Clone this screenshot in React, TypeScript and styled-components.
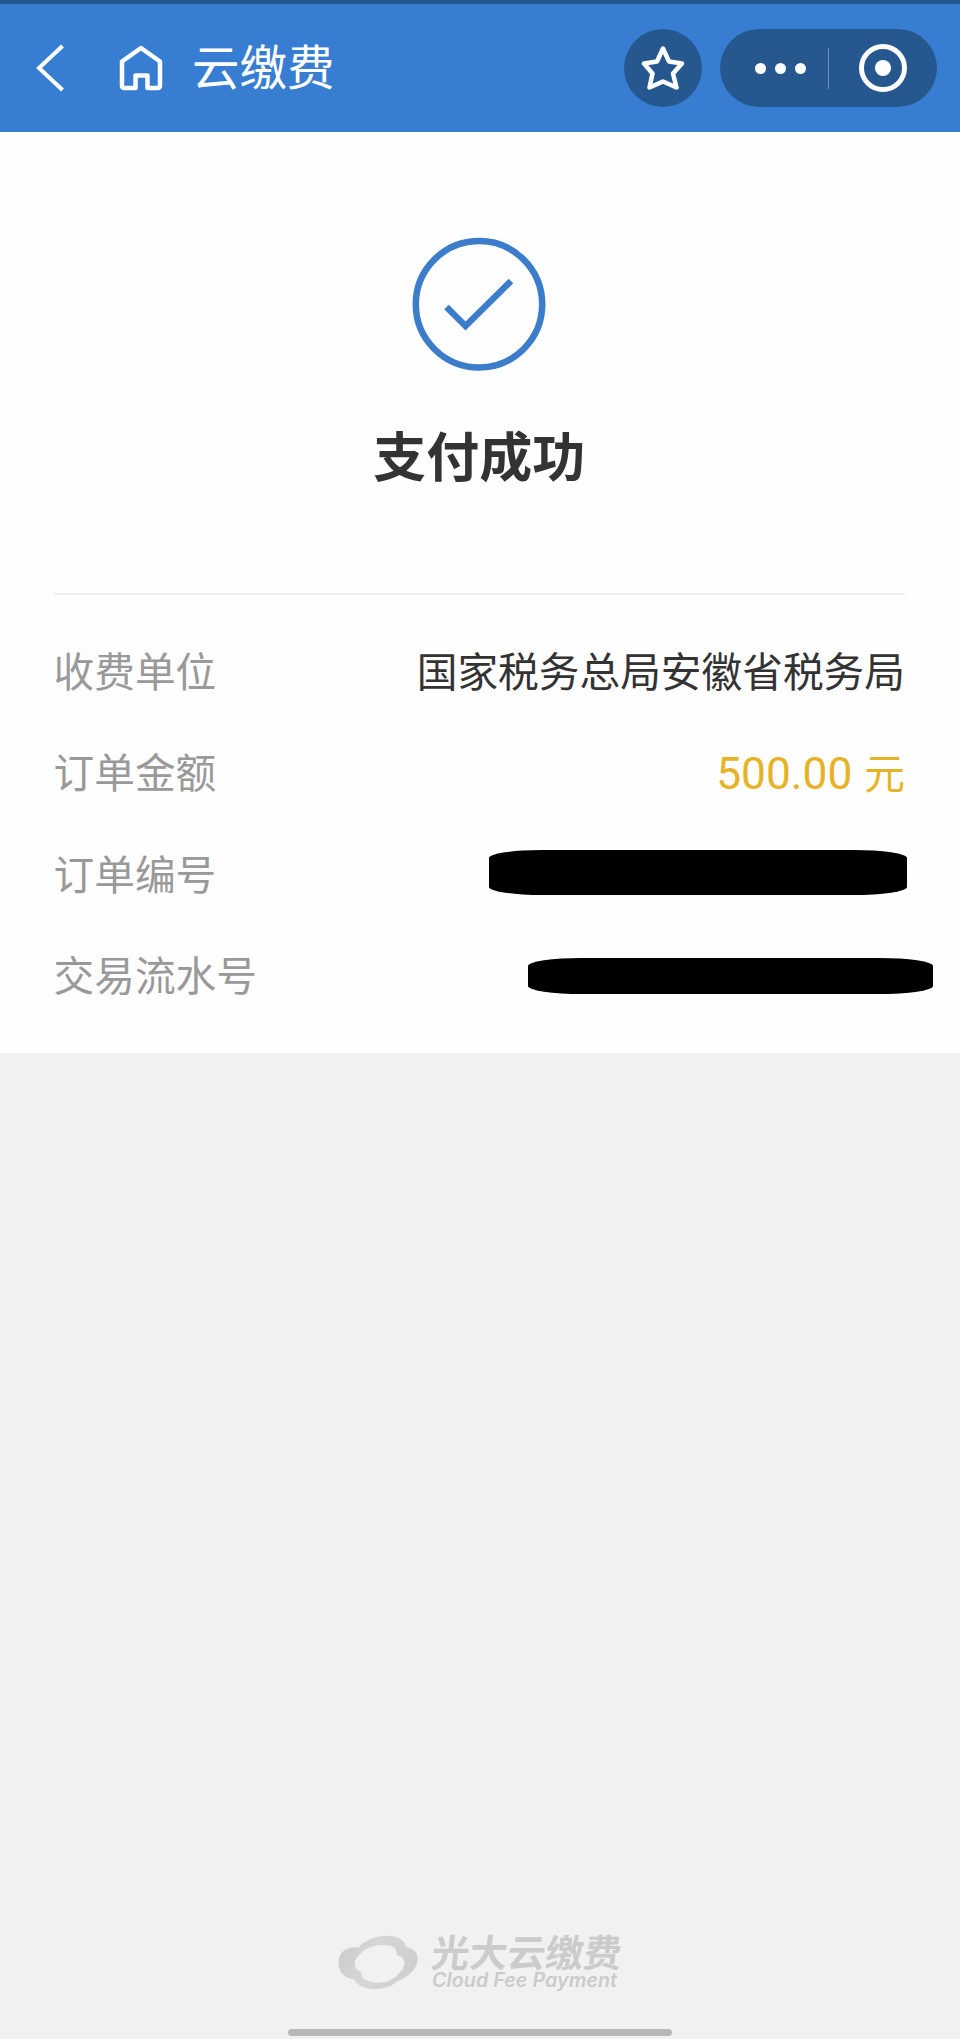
import React from "react";
import styled, { createGlobalStyle } from "styled-components";

const Global = createGlobalStyle`
  * { box-sizing: border-box; }
  html, body { margin: 0; padding: 0; background: #f1f1f1; }
  body { font-family: "Noto Sans CJK SC", sans-serif; }
`;

const Page = styled.div`
  display: flex;
  flex-direction: column;
  width: 960px;
  height: 2039px;
  overflow: hidden;
  background: #f1f1f1;
`;

const NavBar = styled.header`
  display: flex;
  align-items: center;
  flex: none;
  height: 132px;
  padding: 0 23px 0 36px;
  border-top: 4px solid #24598f;
  background: #377ed3;
  color: #fff;
`;

const BackIcon = styled.svg`
  flex: none;
  width: 28px;
  height: 48px;
`;

const HomeIcon = styled.svg`
  flex: none;
  width: 44px;
  height: 46px;
  margin-left: 55px;
`;

const NavTitle = styled.h1`
  flex: 1;
  margin: 0 0 0 29px;
  padding-bottom: 6px;
  font-size: 47.5px;
  font-weight: 400;
  line-height: 64px;
`;

const RoundButton = styled.div`
  display: flex;
  align-items: center;
  justify-content: center;
  width: 78px;
  height: 78px;
  border-radius: 50%;
  background: #26588f;
`;

const Capsule = styled.div`
  display: flex;
  align-items: center;
  width: 217px;
  height: 78px;
  margin-left: 18px;
  padding: 0 30px 0 35px;
  border-radius: 39px;
  background: #26588f;
`;

const Dots = styled.div`
  display: flex;
  gap: 9px;
`;

const Dot = styled.i`
  width: 11px;
  height: 11px;
  border-radius: 50%;
  background: #fff;
`;

const CapsuleLine = styled.i`
  width: 1px;
  height: 41px;
  margin-left: 22px;
  background: #6f93bb;
`;

const Ring = styled.div`
  display: flex;
  align-items: center;
  justify-content: center;
  width: 48px;
  height: 48px;
  margin-left: auto;
  border: 5.5px solid #fff;
  border-radius: 50%;

  &::after {
    content: "";
    width: 16px;
    height: 16px;
    border-radius: 50%;
    background: #fff;
  }
`;

const Card = styled.main`
  flex: none;
  height: 921px;
  padding: 0 55px 0 53.5px;
  background: #fefefe;
`;

const Result = styled.section`
  display: flex;
  flex-direction: column;
  align-items: center;
  height: 463px;
  padding-top: 105px;
  border-bottom: 2px solid #efefef;
`;

const ResultText = styled.h2`
  margin: 44px 0 0;
  color: #333;
  font-size: 53px;
  font-weight: 700;
  line-height: 78px;
`;

const Details = styled.dl`
  margin: 0;
  padding-top: 24.5px;
`;

const Row = styled.div`
  display: flex;
  align-items: center;
  justify-content: space-between;
  height: 101.3px;
  font-size: 40.7px;
  line-height: 60px;
`;

const Label = styled.dt`
  color: #999;
`;

const Value = styled.dd<{ $amount?: boolean }>`
  display: flex;
  align-items: baseline;
  gap: 12px;
  margin: 0;
  padding-top: ${(p) => (p.$amount ? 3 : 0)}px;
  color: ${(p) => (p.$amount ? "#e8b227" : "#333")};
`;

const Digits = styled.span`
  font-family: Roboto, sans-serif;
  font-size: 44.3px;
`;

const Redaction = styled.dd<{ $width: number; $height: number; $outset: number; $drop?: number }>`
  width: ${(p) => p.$width}px;
  height: ${(p) => p.$height}px;
  margin: ${(p) => p.$drop ?? 0}px -${(p) => p.$outset}px 0 0;
  border-radius: 54px / 8px;
  background: #000;
`;

const Footer = styled.footer`
  display: flex;
  flex: 1;
  flex-direction: column;
  align-items: center;
  justify-content: flex-end;
`;

const Brand = styled.div`
  display: flex;
  align-items: center;
  height: 60px;
  margin-bottom: 36px;
  color: #cbcbcb;
`;

const BrandText = styled.div`
  display: flex;
  flex-direction: column;
  width: 190px;
  margin-left: 14px;
  padding-bottom: 3px;
  white-space: nowrap;
`;

const BrandName = styled.span`
  font-size: 38px;
  font-weight: 700;
  line-height: 36px;
  transform: skewX(-6deg);
`;

const BrandLatin = styled.span`
  font-family: Inter, sans-serif;
  font-size: 19.6px;
  font-style: italic;
  font-weight: 600;
  letter-spacing: 0.1px;
  line-height: 22px;
`;

const HomeIndicator = styled.div`
  width: 384px;
  height: 7px;
  margin-bottom: 3px;
  border-radius: 4px;
  background: #b7b7b7;
`;

export default function App() {
  return (
    <Page>
      <Global />
      <NavBar>
        <BackIcon viewBox="0 0 28 48" fill="none" stroke="#fff" strokeWidth="4">
          <path d="M26.5 2 3 24l23.500 22" />
        </BackIcon>
        <HomeIcon viewBox="0 0 44 46" fill="none" stroke="#fff" strokeWidth="4.500" strokeLinejoin="round">
          <path d="M3 16.500 22 3 41 16.500V41a2 2 0 0 1-2 2H28.500V30.500H16.500V43H5a2 2 0 0 1-2-2Z" />
        </HomeIcon>
        <NavTitle>云缴费</NavTitle>
        <RoundButton>
          <svg width="44" height="46" viewBox="0 0 44 46" fill="none" stroke="#fff" strokeWidth="4.500" strokeLinejoin="round">
            <path d="M22 3.500 28 16.500 41 18.500 32 28.500 35.500 42.500 22 36.500 8.500 42.500 11.500 28.500 3 18.500 16 16.500Z" />
          </svg>
        </RoundButton>
        <Capsule>
          <Dots>
            <Dot />
            <Dot />
            <Dot />
          </Dots>
          <CapsuleLine />
          <Ring />
        </Capsule>
      </NavBar>
      <Card>
        <Result>
          <svg width="134" height="134" viewBox="0 0 134 134" fill="none" stroke="#3b7dcb" strokeWidth="6.500">
            <circle cx="67" cy="67.300" r="63.2" />
            <path d="M34.500 70 53.500 89 99 44" />
          </svg>
          <ResultText>支付成功</ResultText>
        </Result>
        <Details>
          <Row>
            <Label>收费单位</Label>
            <Value>国家税务总局安徽省税务局</Value>
          </Row>
          <Row>
            <Label>订单金额</Label>
            <Value $amount>
              <Digits>500.00</Digits>
              <span>元</span>
            </Value>
          </Row>
          <Row>
            <Label>订单编号</Label>
            <Redaction $width={418} $height={45} $outset={2} />
          </Row>
          <Row>
            <Label>交易流水号</Label>
            <Redaction $width={405} $height={36} $outset={27.5} $drop={3} />
          </Row>
        </Details>
      </Card>
      <Footer>
        <Brand>
          <svg width="80" height="56" viewBox="0 0 80 56">
            <defs>
              <linearGradient id="cloud" x1="0" y1="0" x2="1" y2="0.3">
                <stop offset="0" stopColor="#cacaca" />
                <stop offset="0.5" stopColor="#d6d6d6" />
                <stop offset="1" stopColor="#cfcfcf" />
              </linearGradient>
            </defs>
            <path
              fill="url(#cloud)"
              fillRule="evenodd"
              d="M0.700 27C1 20 4 16 9 14C13 12.500 17 12.500 20.500 12.700C22 10 25 7.500 29 6C34 3 40 1 46 1C52 0.500 57 1 60.500 3C65 5 67.500 8 68 12C73 13 77 15 78.500 19C80 22 80 25 79 28C77.500 33 75 36 72 38.500C68 42 64 44 59 46.500C54 51 48 53 42 53.500C36 55 30 54 25 52C20 50 18 47 15 44C11 43.500 7 42 5 39.500C2 37 0.500 32 0.700 27ZM17 30C16 25 19 22 22 19.500C25 16 28 13.500 32 12.500C36 10.500 41 10 45.500 10C51 10 55 11 57.500 14C58.500 17 58 19 59.500 20.500C62.500 21 65 22 66 25.500C67 29 66 32 64 35C60 40 56 44 49 46.500C44 48 37 48 32 46.500C28 45.500 25 44 24 41.500C23.500 39.500 24 38 22 36.500C19 35 17.500 33 17 30Z"
            />
          </svg>
          <BrandText>
            <BrandName>光大云缴费</BrandName>
            <BrandLatin>Cloud Fee Payment</BrandLatin>
          </BrandText>
        </Brand>
        <HomeIndicator />
      </Footer>
    </Page>
  );
}
